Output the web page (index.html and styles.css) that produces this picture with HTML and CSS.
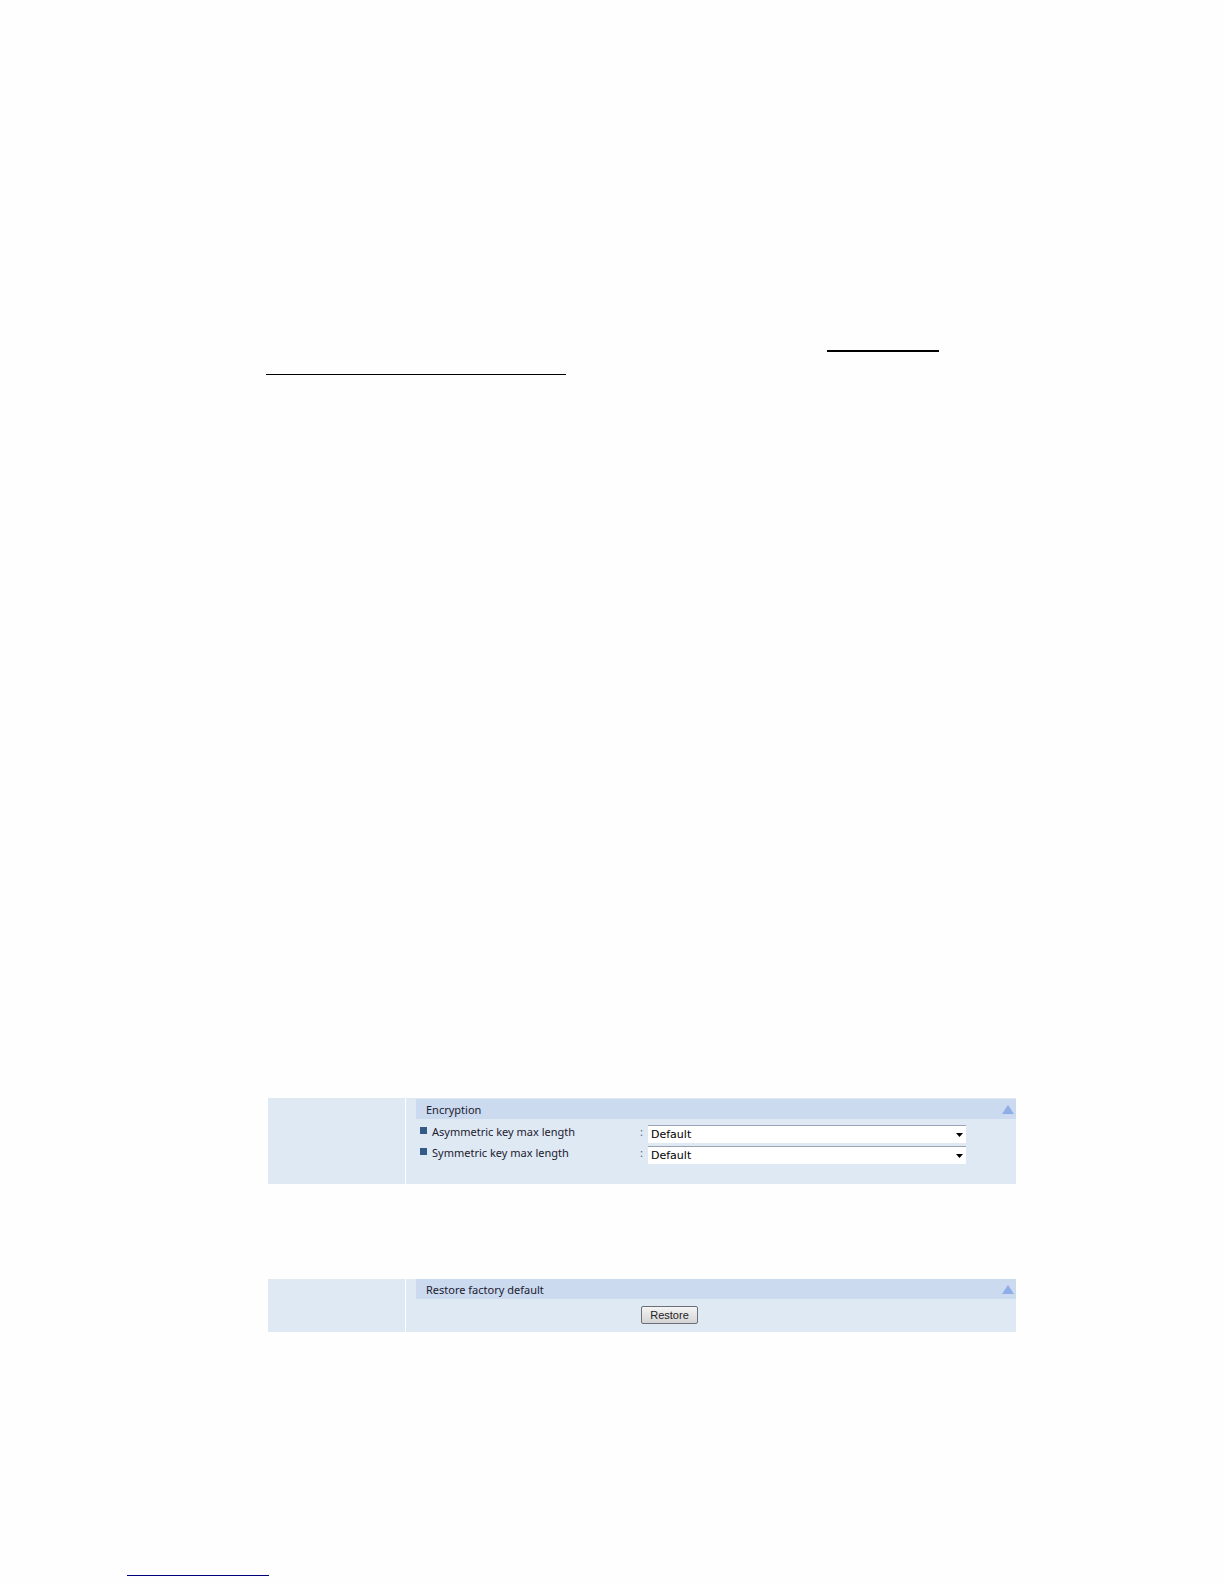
FILE: index.html
```
<!DOCTYPE html>
<html lang="en">
<head>
    <meta charset="UTF-8">
    <meta name="viewport" content="width=device-width, initial-scale=1.0">
    <title>Security settings</title>
    <link rel="stylesheet" href="styles.css">
</head>
<body>
    <main class="content">
        <hr class="rule rule-short">
        <hr class="rule rule-long">

        <section class="panel panel-encryption">
            <div class="panel-side"></div>
            <div class="panel-body">
                <div class="panel-header">
                    <h2>Encryption</h2>
                    <button class="collapse" type="button" aria-label="Collapse Encryption">
                        <svg width="12" height="9" viewBox="0 0 12 9"><path d="M6 0L12 9H0Z" fill="#8faee8"/></svg>
                    </button>
                </div>
                <div class="fields">
                    <div class="field">
                        <label for="asymmetric">Asymmetric key max length</label>
                        <span class="colon">:</span>
                        <div class="select-box">
                            <select id="asymmetric">
                                <option>Default</option>
                            </select>
                            <svg class="arrow" width="7" height="4" viewBox="0 0 7 4"><path d="M0 0H7L3.5 4Z" fill="#000"/></svg>
                        </div>
                    </div>
                    <div class="field">
                        <label for="symmetric">Symmetric key max length</label>
                        <span class="colon">:</span>
                        <div class="select-box">
                            <select id="symmetric">
                                <option>Default</option>
                            </select>
                            <svg class="arrow" width="7" height="4" viewBox="0 0 7 4"><path d="M0 0H7L3.5 4Z" fill="#000"/></svg>
                        </div>
                    </div>
                </div>
            </div>
        </section>

        <section class="panel panel-restore">
            <div class="panel-side"></div>
            <div class="panel-body">
                <div class="panel-header">
                    <h2>Restore factory default</h2>
                    <button class="collapse" type="button" aria-label="Collapse Restore factory default">
                        <svg width="12" height="9" viewBox="0 0 12 9"><path d="M6 0L12 9H0Z" fill="#8faee8"/></svg>
                    </button>
                </div>
                <div class="actions">
                    <button class="restore" type="button">Restore</button>
                </div>
            </div>
        </section>
    </main>
    <footer class="footer">
        <hr class="rule rule-footer">
    </footer>
</body>
</html>
```
FILE: styles.css
```
body {
    margin: 0;
    background: #fefefe;
    color: #1c2030;
    font-family: "Noto Sans", Verdana, sans-serif;
    font-size: 11px;
}
.content {
    padding: 350px 208px 0 266px;
}
.rule {
    height: 1px;
    margin: 0;
    border: none;
    background: #000;
}
.rule-short {
    width: 112px;
    height: 2px;
    margin: 0 77px 22px auto;
}
.rule-long {
    width: 300px;
}
.panel {
    display: flex;
    gap: 1px;
    margin-left: 2px;
}
.panel-encryption {
    margin-top: 723px;
}
.panel-restore {
    margin-top: 95px;
}
.panel-side {
    flex: 0 0 137px;
    background: #dfe9f3;
}
.panel-body {
    flex: 1;
    padding-left: 10px;
    background: #dfe9f3;
}
.panel-encryption .panel-body {
    padding-top: 1px;
}
.panel-header {
    display: flex;
    align-items: center;
    justify-content: space-between;
    height: 20px;
    padding: 0 2px 0 10px;
    background: #cbdaee;
}
.panel-header h2 {
    margin: 0;
    font-size: 11px;
    font-weight: normal;
}
.collapse {
    display: flex;
    padding: 0;
    border: none;
    background: none;
    cursor: pointer;
}
.fields {
    display: flex;
    flex-direction: column;
    gap: 3px;
    padding: 6px 50px 20px 4px;
}
.field {
    display: grid;
    grid-template-columns: 220px 8px 1fr;
    line-height: 14px;
}
.field label {
    display: flex;
    gap: 5px;
}
.field label::before {
    content: "";
    width: 7px;
    height: 7px;
    margin-top: 2px;
    background: #345a88;
}
.colon {
    color: #4c6485;
}
.select-box {
    position: relative;
}
.select-box select {
    display: block;
    width: 100%;
    height: 18px;
    padding: 0 16px 0 3px;
    border: none;
    border-top: 1px solid #9aa3b3;
    border-radius: 0;
    background: #fff;
    color: #000;
    font-family: "DejaVu Sans", Verdana, sans-serif;
    font-size: 11px;
    appearance: none;
}
.select-box .arrow {
    position: absolute;
    top: 8px;
    right: 3px;
    pointer-events: none;
}
.actions {
    padding: 7px 0 8px 225px;
}
.restore {
    display: block;
    width: 57px;
    height: 18px;
    padding: 0;
    border: 1px solid #6c7076;
    border-radius: 2px;
    background: linear-gradient(#f4f4f4, #d4d4d4);
    color: #222;
    font-family: "Liberation Sans", Arial, sans-serif;
    font-size: 11px;
    line-height: 14px;
}
.footer {
    padding: 243px 0 8px 127px;
}
.rule-footer {
    width: 142px;
    background: #00007c;
}
```
